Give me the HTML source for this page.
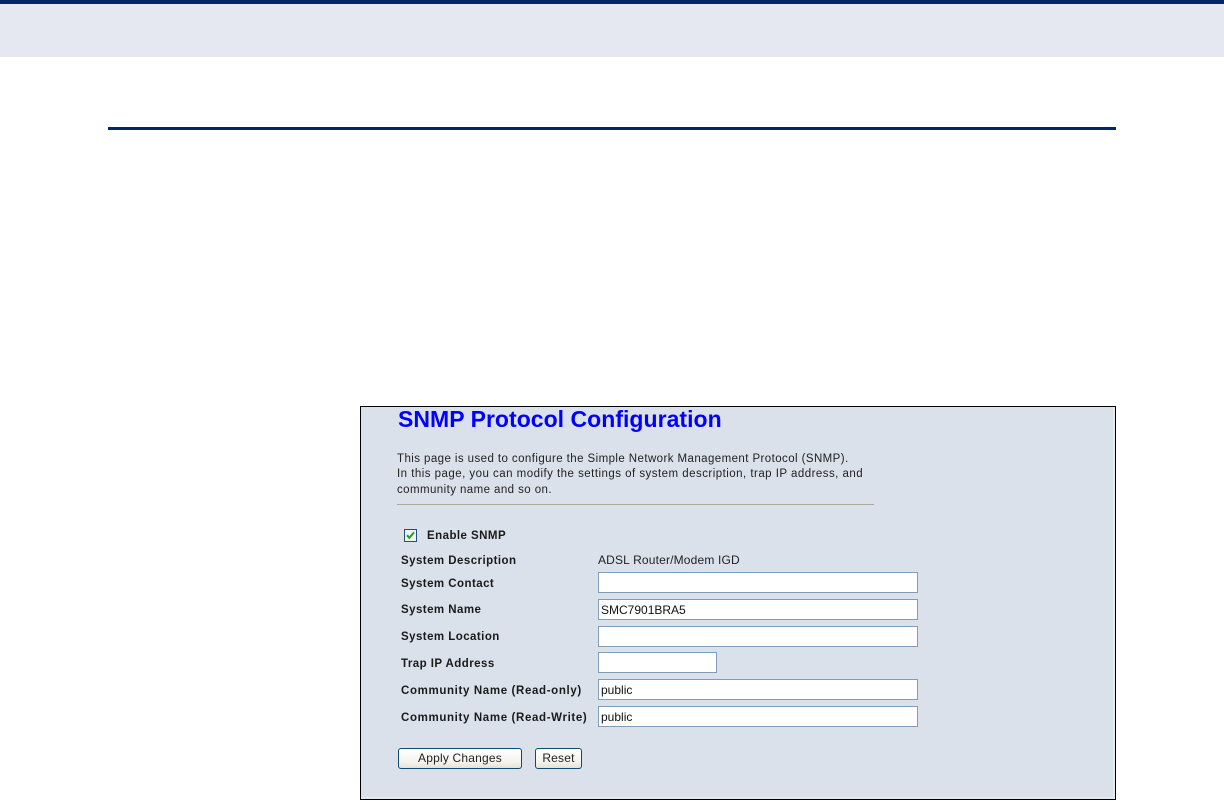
<!DOCTYPE html>
<html>
<head>
<meta charset="utf-8">
<style>
html,body{margin:0;padding:0;background:#fff;width:1224px;height:801px;overflow:hidden}
body{position:relative;font-family:"Liberation Sans",Arial,sans-serif;color:#111}
.a{position:absolute;white-space:nowrap}
.l{position:absolute;left:401px;font-size:11.5px;font-weight:bold;letter-spacing:.45px;line-height:14px;white-space:nowrap;color:#1a1a1a}
.c{letter-spacing:.64px}
.i{position:absolute;left:598px;height:19px;background:#fff;border:1px solid #7f9db9;font-size:12px;line-height:20px;color:#111;padding-left:2px;box-sizing:content-box;width:316px;white-space:nowrap}
.p{position:absolute;left:397px;font-size:11.5px;line-height:14px;letter-spacing:.42px;white-space:nowrap;color:#222}
.b{position:absolute;top:748px;height:21px;box-sizing:border-box;border:1px solid #0f4a75;border-radius:3px;background:linear-gradient(#fff,#f4f3ec 70%,#e3e1d6);font-size:12px;line-height:19px;text-align:center;letter-spacing:.2px;color:#222}
</style>
</head>
<body>
<div class="a" style="left:0;top:0;width:1224px;height:4px;background:#002868"></div>
<div class="a" style="left:0;top:4px;width:1224px;height:53px;background:#e6e8f1"></div>
<div class="a" style="left:108px;top:127px;width:1008px;height:3px;background:#002868"></div>

<div class="a" style="left:360px;top:406px;width:756px;height:394px;box-sizing:border-box;border:1px solid #000;background:#dae1ea;box-shadow:inset -2px -2px 0 #e4e9ef"></div>

<div class="a" style="left:398px;top:405px;font-size:23px;line-height:28px;font-weight:bold;color:#0000ff;letter-spacing:.03px">SNMP Protocol Configuration</div>

<div class="p" style="top:452px">This page is used to configure the Simple Network Management Protocol (SNMP).</div>
<div class="p" style="top:467px;letter-spacing:.47px">In this page, you can modify the settings of system description, trap IP address, and</div>
<div class="p" style="top:483px">community name and so on.</div>
<div class="a" style="left:397px;top:504px;width:477px;height:1px;background:#aeab98"></div>

<svg class="a" style="left:404px;top:529px" width="13" height="13" viewBox="0 0 13 13">
<rect x=".5" y=".5" width="12" height="12" fill="#eef3ee" stroke="#1c5180"/>
<path d="M3 6.2 L5.3 8.8 L10 3.4" fill="none" stroke="#21a121" stroke-width="2"/>
</svg>
<div class="l" style="left:427px;top:529px">Enable SNMP</div>

<div class="l" style="top:554px">System Description</div>
<div class="a" style="left:598px;top:553px;font-size:12px;line-height:14px;letter-spacing:.17px;color:#222">ADSL Router/Modem IGD</div>

<div class="l" style="top:577px">System Contact</div>
<div class="i" style="top:572px"></div>
<div class="l" style="top:603px">System Name</div>
<div class="i" style="top:599px">SMC7901BRA5</div>
<div class="l" style="top:630px">System Location</div>
<div class="i" style="top:626px"></div>
<div class="l" style="top:657px">Trap IP Address</div>
<div class="i" style="top:652px;width:115px;height:19px"></div>
<div class="l c" style="top:684px">Community Name (Read-only)</div>
<div class="i" style="top:679px">public</div>
<div class="l c" style="top:711px">Community Name (Read-Write)</div>
<div class="i" style="top:706px">public</div>

<div class="b" style="left:398px;width:124px">Apply Changes</div>
<div class="b" style="left:535px;width:47px">Reset</div>
</body>
</html>
